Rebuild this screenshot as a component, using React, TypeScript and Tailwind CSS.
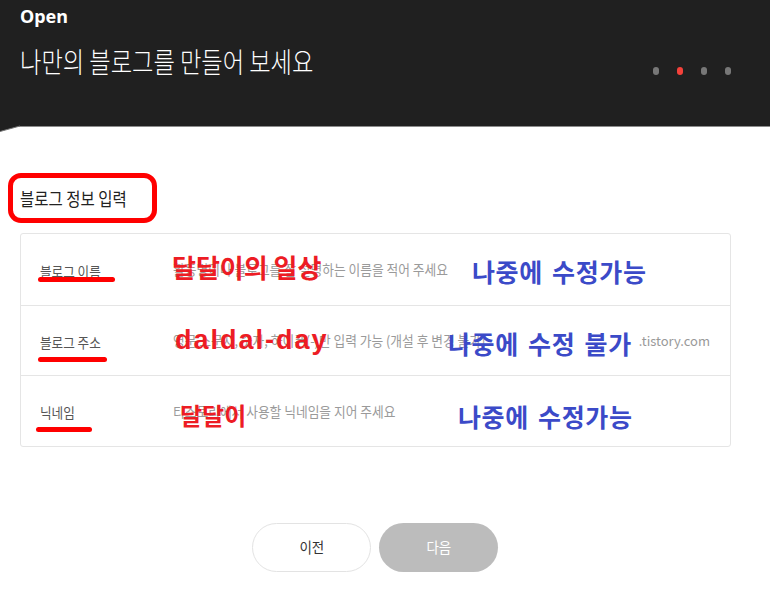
import React from "react";

const rows = [
  { label: "블로그 이름", hint: "활동명이나 블로그를 잘 설명하는 이름을 적어 주세요", suffix: "" },
  { label: "블로그 주소", hint: "영문 소문자, 숫자, 하이픈(-)만 입력 가능 (개설 후 변경 불가)", suffix: ".tistory.com" },
  { label: "닉네임", hint: "티스토리에서 사용할 닉네임을 지어 주세요", suffix: "" },
];

export default function App() {
  return (
    <div className="relative h-[589px] w-full overflow-hidden bg-white font-['Noto_Sans_CJK_KR','Noto_Sans',sans-serif]">
      {/* Header */}
      <header className="relative h-[127px] border-b border-[#8c8c8c] bg-[#202020] pt-[4px] pr-[39px] pl-5 text-white">
        <p className="h-[24px] font-['Noto_Sans',sans-serif] text-[18px] leading-[24px] font-bold">Open</p>
        <div className="mt-[15px] flex items-center justify-between">
          <h1 className="inline-block h-[36px] origin-left scale-x-[0.83] text-[28px] leading-[36px] font-light whitespace-nowrap">
            나만의 블로그를 만들어 보세요
          </h1>
          <div className="mt-[19px] flex gap-[18px]">
            <span className="h-[8px] w-[6px] rounded-full bg-[#777]" />
            <span className="h-[8px] w-[6px] rounded-full bg-[#f4413a]" />
            <span className="h-[8px] w-[6px] rounded-full bg-[#777]" />
            <span className="h-[8px] w-[6px] rounded-full bg-[#777]" />
          </div>
        </div>
        <svg className="absolute top-[125px] left-0" width="20" height="7" viewBox="0 0 20 7">
          <polygon points="0,0 20,0 20,1 0,6.5" fill="#202020" />
          <line x1="20" y1="1" x2="0" y2="6.5" stroke="#777" strokeWidth="1" />
        </svg>
      </header>

      {/* Form */}
      <main className="pt-[57px]">
        <h2 className="ml-5 inline-block h-[28px] origin-left scale-x-[0.86] text-[18px] leading-[28px] text-[#222] whitespace-nowrap">
          블로그 정보 입력
        </h2>
        <div className="mt-[21px] ml-5 w-[711px] rounded-[3px] border border-[#e5e5e5]">
          {rows.map((row, i) => (
            <div
              key={row.label}
              className={`flex items-center pl-[19px] pr-[20px] ${i === 1 ? "h-[70px]" : "h-[71px]"} ${i > 0 ? "border-t border-[#e5e5e5]" : ""}`}
            >
              <div className="w-[133px] shrink-0">
                <span className="inline-block origin-left scale-x-[0.9] text-[14px] text-[#555] whitespace-nowrap">
                  {row.label}
                </span>
              </div>
              <span className="inline-block origin-left scale-x-[0.91] text-[14px] text-[#9a9a9a] whitespace-nowrap">
                {row.hint}
              </span>
              {row.suffix && (
                <span className="ml-auto text-[13px] text-[#999]">{row.suffix}</span>
              )}
            </div>
          ))}
        </div>

        <div className="mt-[76px] flex justify-center gap-2 pr-[20px]">
          <button className="flex h-[49px] w-[119px] items-center justify-center rounded-full border border-[#e3e3e3] bg-white">
            <span className="inline-block scale-x-[0.9] text-[15px] text-[#333]">이전</span>
          </button>
          <button className="flex h-[49px] w-[119px] items-center justify-center rounded-full bg-[#bcbcbc]">
            <span className="inline-block scale-x-[0.9] text-[15px] text-white">다음</span>
          </button>
        </div>
      </main>

      {/* Annotations drawn over the screenshot */}
      <div className="pointer-events-none absolute inset-0">
        <div className="absolute top-[173px] left-[8px] h-[50px] w-[149px] rounded-[13px] border-[5px] border-[#ff0000]" />
        <div className="absolute top-[277px] left-[38px] h-[5px] w-[77px] rounded-sm bg-[#ff0000]" />
        <div className="absolute top-[357px] left-[38px] h-[5px] w-[69px] rounded-sm bg-[#ff0000]" />
        <div className="absolute top-[427px] left-[36px] h-[5px] w-[56px] rounded-sm bg-[#ff0000]" />

        <p className="absolute top-[254px] left-[172px] text-[26px] leading-[26px] font-bold whitespace-nowrap text-[#ed1c24]">
          달달이의 일상
        </p>
        <p className="absolute top-[327px] left-[175px] font-['Liberation_Sans',sans-serif] text-[27px] leading-[27px] font-bold tracking-[2px] whitespace-nowrap text-[#ed1c24]">
          daldal-day
        </p>
        <p className="absolute top-[403px] left-[180px] text-[24px] leading-[24px] font-bold whitespace-nowrap text-[#ed1c24]">
          달달이
        </p>

        <p className="absolute top-[259px] left-[472px] text-[25px] leading-[25px] font-bold tracking-[0.6px] whitespace-nowrap text-[#3b4ac8] [word-spacing:3px]">
          나중에 수정가능
        </p>
        <p className="absolute top-[331px] left-[448px] text-[25px] leading-[25px] font-bold tracking-[0.6px] whitespace-nowrap text-[#3b4ac8] [word-spacing:3px]">
          나중에 수정 불가
        </p>
        <p className="absolute top-[404px] left-[458px] text-[25px] leading-[25px] font-bold tracking-[0.6px] whitespace-nowrap text-[#3b4ac8] [word-spacing:3px]">
          나중에 수정가능
        </p>
      </div>
    </div>
  );
}
